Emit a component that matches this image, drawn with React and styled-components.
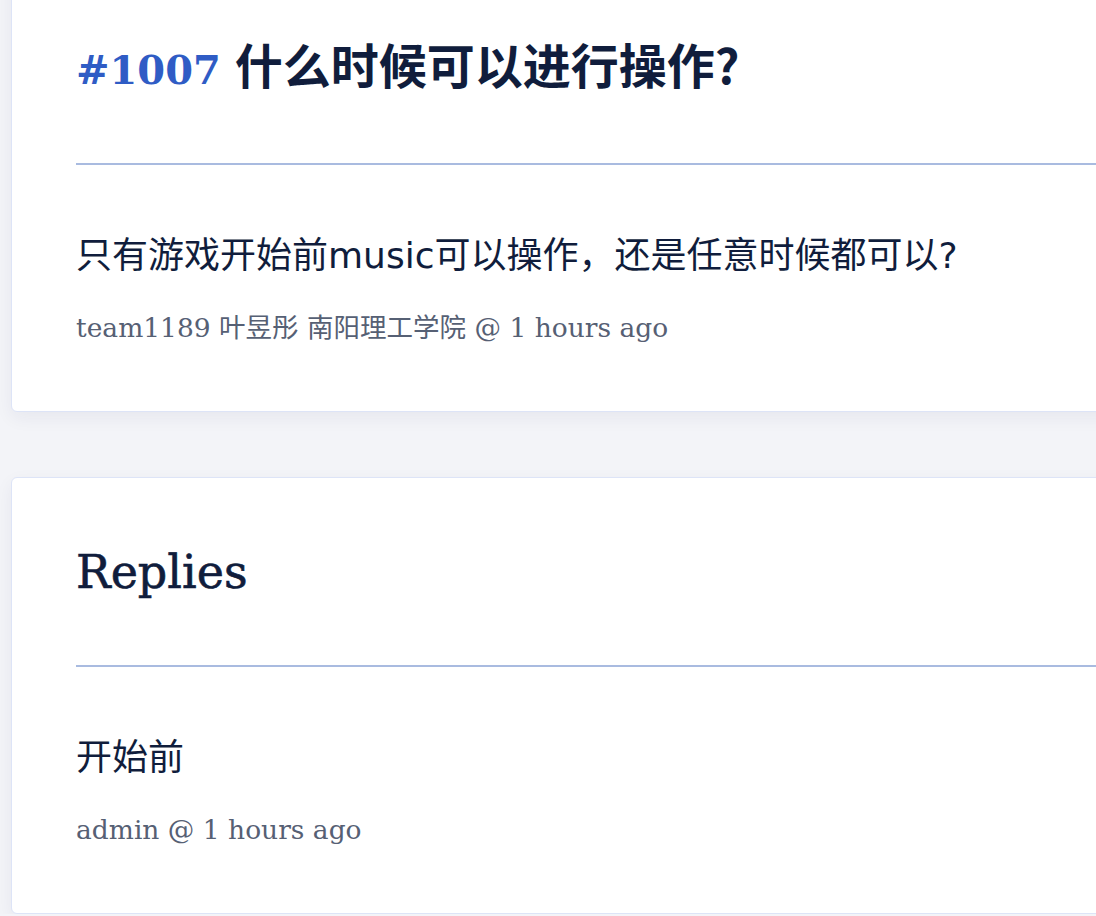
import React from "react";
import styled, { createGlobalStyle } from "styled-components";

const GlobalStyle = createGlobalStyle`
  html, body {
    margin: 0;
    background: #f3f4f8;
    overflow: hidden;
  }
`;

const Page = styled.main`
  display: flex;
  flex-direction: column;
  gap: 65px;
  width: 1240px;
  margin-top: -40px;
  padding-left: 11px;
`;

const Card = styled.section`
  background: #fff;
  border: 1px solid #dde4f7;
  border-radius: 6px;
  box-shadow: 0 6px 18px rgba(30, 40, 80, 0.06);
  padding: 67px 0 64px 64px;
`;

const Title = styled.h1`
  margin: 0 0 2px;
  font-family: "Noto Sans CJK SC", sans-serif;
  font-size: 48px;
  line-height: 70px;
  font-weight: 700;
  color: #101d3c;
`;

const Number = styled.span`
  font-family: "DejaVu Serif", serif;
  font-size: 40px;
  line-height: 1;
  color: #2f5cc5;
  margin-right: 14px;
`;

const SectionTitle = styled.h2`
  margin: 0;
  font-family: "DejaVu Serif", serif;
  font-size: 46px;
  line-height: 55px;
  font-weight: 400;
  color: #101d3c;
  -webkit-text-stroke: 0.6px #101d3c;
`;

const Divider = styled.hr`
  margin: 65px 0 0;
  border: 0;
  height: 2px;
  background: #a9bbe0;
`;

const Body = styled.p`
  margin: 65px 0 0;
  font-family: "DejaVu Sans", "Noto Sans CJK SC", sans-serif;
  font-size: 36px;
  line-height: 51px;
  color: #101d3c;
`;

const Meta = styled.p`
  margin: 27px 0 0;
  font-family: "DejaVu Serif", "Noto Sans CJK SC", serif;
  font-size: 26.5px;
  line-height: 39px;
  color: #566074;
`;

const Post = ({ body, author }) => (
  <>
    <Body>{body}</Body>
    <Meta>{author} @ 1 hours ago</Meta>
  </>
);

export default function App() {
  return (
    <>
      <GlobalStyle />
      <Page>
        <Card>
          <Title>
            <Number>#1007</Number>什么时候可以进行操作?
          </Title>
          <Divider />
          <Post
            body="只有游戏开始前music可以操作，还是任意时候都可以?"
            author="team1189 叶昱彤 南阳理工学院"
          />
        </Card>
        <Card>
          <SectionTitle>Replies</SectionTitle>
          <Divider />
          <Post body="开始前" author="admin" />
        </Card>
      </Page>
    </>
  );
}
